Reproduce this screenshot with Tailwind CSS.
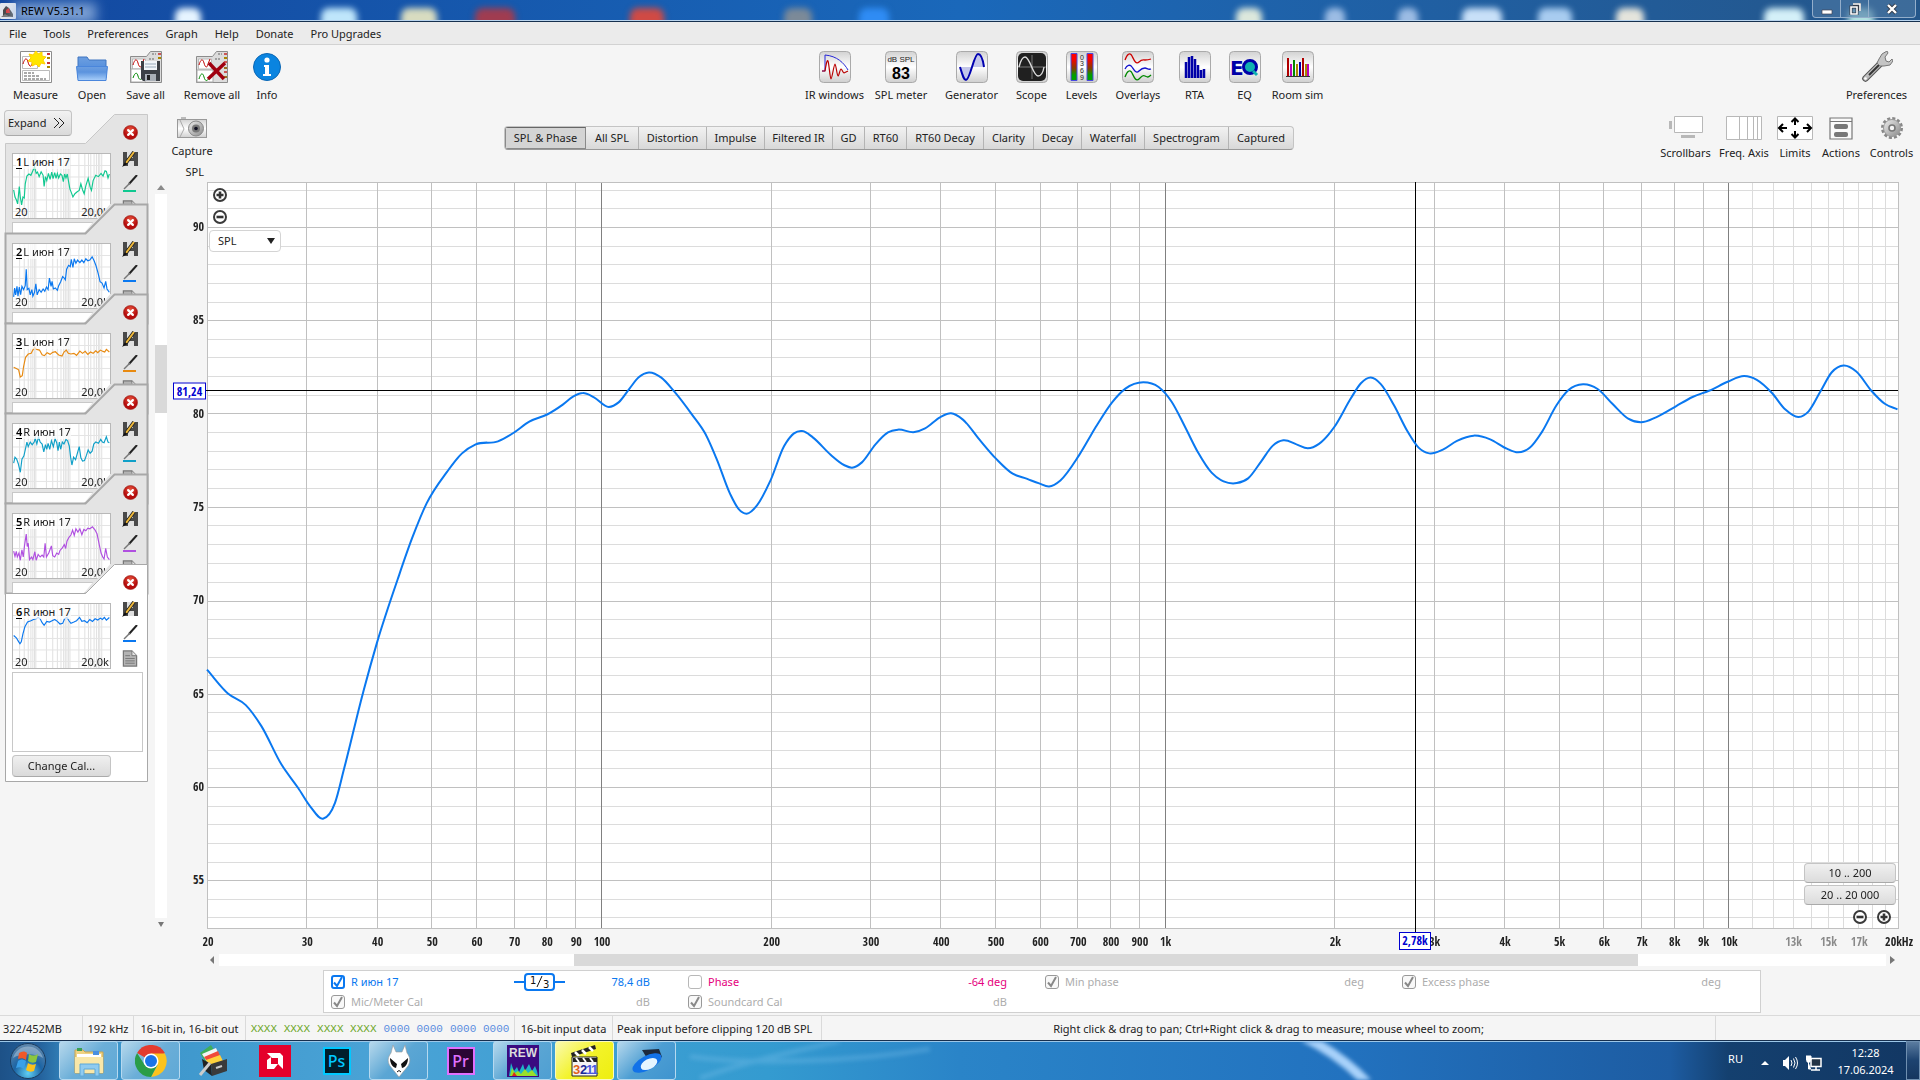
<!DOCTYPE html>
<html lang="en">
<head>
  <meta charset="UTF-8" />
  <meta name="viewport" content="width=device-width, initial-scale=1" />
  <title>REW V5.31.1</title>
  <!-- Tailwind CSS CDN -->
  <script src="https://cdn.jsdelivr.net/npm/@tailwindcss/browser@4"></script>
</head>
<body class="min-h-screen flex flex-col bg-[#f5f5f5] font-['Noto_Sans','Open_Sans',sans-serif] text-[11px] leading-4 text-[#222] whitespace-nowrap overflow-x-hidden">

  <!-- Shared gradients and symbols -->
  <svg class="absolute w-0 h-0" aria-hidden="true">
    <defs>
      <linearGradient id="tile" x2="0" y2="1"><stop stop-color="#d2d2d2"/><stop offset=".5" stop-color="#fff"/><stop offset="1" stop-color="#cfcfcf"/></linearGradient>
      <linearGradient id="level" x2="0" y2="1"><stop offset=".2" stop-color="#f00"/><stop offset=".55" stop-color="#844000"/><stop offset=".8" stop-color="#00a000"/></linearGradient>
      <linearGradient id="folder" x2="0" y2="1"><stop stop-color="#6d9fe0"/><stop offset=".4" stop-color="#5b93de"/><stop offset="1" stop-color="#a9cffa"/></linearGradient>
      <radialGradient id="red" cy=".3"><stop stop-color="#e8553f"/><stop offset="1" stop-color="#b50d0d"/></radialGradient>
      <linearGradient id="metal" x2="1" y2="1"><stop stop-color="#eee"/><stop offset="1" stop-color="#8a8a8a"/></linearGradient>
      <radialGradient id="orb" cy=".85" r=".8"><stop stop-color="#5fd0f5"/><stop offset=".5" stop-color="#1c64a4"/><stop offset="1" stop-color="#5c86ac"/></radialGradient>
      <symbol id="sheet" viewBox="0 0 32 32">
        <path d="M.5 5.500h16l4-5h11v31H.5z" fill="#dcdcdc" stroke="#8c8c8c"/>
        <path d="M2.500 8h13v10h-13z" fill="#fff" stroke="#bbb"/>
        <path d="M3 14c2-7 4-6 5-2s3 6 4 1l2-5" fill="none" stroke="#c00000"/>
        <path d="M28 3h3" stroke="#c55" stroke-width="2"/><path d="M28 7h3" stroke="#a80" stroke-width="2"/>
        <path d="M22 3h4M19 8h5" stroke="#666" stroke-dasharray="2 1"/>
      </symbol>
      <symbol id="close" viewBox="0 0 16 16">
        <circle cx="8" cy="8" r="7.500" fill="url(#red)" stroke="#9a1a12" stroke-width=".6"/>
        <path d="M5.500 5.500l5 5m0-5l-5 5" stroke="#fff" stroke-width="2.400" stroke-linecap="round"/>
      </symbol>
      <symbol id="rename" viewBox="0 0 16 16">
        <path d="M1 1h15v14H1z" fill="#4a4a4a"/><path d="M5 1h6v6H5zM6 10h6v5H6z" fill="#e0e0e0"/>
        <path d="M12 1L4 12" stroke="#222" stroke-width="3.600"/><path d="M12 1L4 12" stroke="#f0b93a" stroke-width="2"/><path d="M0 16l3-5 2.500 2z" fill="#111"/>
      </symbol>
      <symbol id="note" viewBox="0 0 16 18">
        <path d="M1 1h9l5 5v11H1z" fill="#b4b4b4" stroke="#777" stroke-width="1.300"/><path d="M10 1v5h5" fill="#e4e4e4" stroke="#777"/>
        <path d="M3 6h5M3 9h10M3 11.500h10M3 14h10" stroke="#777"/>
      </symbol>
      <symbol id="plus" viewBox="0 0 16 16">
        <circle cx="8" cy="8" r="6" fill="#fff" stroke="#3a3a3a" stroke-width="2"/><path d="M4.500 8h7M8 4.500v7" stroke="#333" stroke-width="2.600"/>
      </symbol>
      <symbol id="minus" viewBox="0 0 16 16">
        <circle cx="8" cy="8" r="6" fill="#fff" stroke="#3a3a3a" stroke-width="2"/><path d="M4.500 8h7" stroke="#333" stroke-width="2.600"/>
      </symbol>
      <symbol id="tick" viewBox="0 0 14 14">
        <path d="M3 7.500l3 3.500L11 2" fill="none" stroke="currentColor" stroke-width="2"/>
      </symbol>
    </defs>
  </svg>

  <!-- Title bar -->
  <header class="relative h-[22px] overflow-hidden flex items-center justify-between bg-gradient-to-r from-[#1348a0] via-[#1a68ba] to-[#24568a] border-b border-[#17304f]">
    <div id="blobs" class="absolute inset-0"></div>
    <div class="absolute inset-x-0 bottom-0 h-px bg-[#b9d4ee]"></div>
    <div class="relative flex items-center gap-[5px]">
      <svg class="w-4 h-4" viewBox="0 0 16 16"><rect width="16" height="16" rx="1" fill="#e4e8ee"/><path d="M3 13V7l3-4 3 2 4 6v3z" fill="#444"/><path d="M6 7l3-2 1 5H6z" fill="#d33"/><path d="M1 14l4-3 5 3z" fill="#777"/></svg>
      <div class="absolute left-3 top-0 w-[84px] h-5 bg-[#a9c4e8]/70 blur-[6px]"></div>
      <h1 class="relative text-[11px] text-black">REW V5.31.1</h1>
    </div>
    <div class="relative flex self-start mr-1 h-[18px] rounded-b border border-t-0 border-[#93aecb] bg-[#4f79a5]/60">
      <button class="w-[28px] flex justify-center items-center border-r border-[#93aecb]" aria-label="Minimize"><svg class="w-3 h-3" viewBox="0 0 12 12"><path d="M1 7h10v4H1z" fill="#fff" stroke="#445" stroke-width=".7"/></svg></button>
      <button class="w-[28px] flex justify-center items-center border-r border-[#93aecb]" aria-label="Restore"><svg class="w-3 h-3" viewBox="0 0 12 12"><path d="M4 1h7v7M2 4h6v7H2z" fill="none" stroke="#333b48" stroke-width="3"/><path d="M4 1h7v7M2 4h6v7H2z" fill="none" stroke="#fff" stroke-width="1.600"/></svg></button>
      <button class="w-[46px] flex justify-center items-center" aria-label="Close"><svg class="w-3 h-3" viewBox="0 0 12 12"><path d="M2 2l8 8m0-8l-8 8" stroke="#333b48" stroke-width="4"/><path d="M2 2l8 8m0-8l-8 8" stroke="#fff" stroke-width="2.400"/></svg></button>
    </div>
  </header>

  <!-- Menu bar -->
  <nav class="h-[23px] flex items-center gap-[17px] px-[9px] pt-px bg-[#ebebeb] border-b border-[#d2d2d2]">
    <button>File</button><button>Tools</button><button>Preferences</button><button>Graph</button><button>Help</button><button>Donate</button><button>Pro Upgrades</button>
  </nav>

  <!-- Main toolbar -->
  <div class="flex justify-between pt-[6px] pb-[5px] px-[13px]">
    <div class="flex gap-[18px]">
      <button class="w-[45px] flex flex-col items-center gap-1">
        <svg class="w-8 h-8" viewBox="0 0 32 32"><path d="M.5.5h31v31H.5z" fill="#fff" stroke="#8c8c8c"/><path d="M2.500 5.500h15v12h-15zM2.500 19.500h27v10h-27z" fill="none" stroke="#bbb"/><path d="M3 13c2-7 4-6 5-2s3 6 4 2l2-4" fill="none" stroke="#c00000"/><path d="M4 22h10M4 25h15M4 28h22" stroke="#555" stroke-dasharray="3 1"/><path d="M27 3h3M27 12h3" stroke="#c33" stroke-width="2"/><path d="M27 7h3M27 16h3" stroke="#a80" stroke-width="2"/><path d="M16 0l2 3 4-2 0 4 4 1-3 3 2 4-4-1-2 4-3-3-4 2 0-4-4-1 3-3-2-4 4 1z" fill="#ffe600" stroke="#ffcf00"/></svg>
        <span>Measure</span>
      </button>
      <button class="w-8 flex flex-col items-center gap-1">
        <svg class="w-8 h-8" viewBox="0 0 32 32"><path d="M2 27V6h9l2 3h17v18z" fill="url(#folder)" stroke="#3f74c0"/><path d="M.5 15.500h31L30 29.500H2z" fill="url(#folder)" stroke="#4a86dc"/></svg>
        <span>Open</span>
      </button>
      <button class="w-[39px] flex flex-col items-center gap-1">
        <svg class="w-8 h-8" viewBox="0 0 32 32"><use href="#sheet"/><path d="M1 18h14v13H1z" fill="#fff" stroke="#aaa"/><path d="M3 27c2-6 4-6 5-2s3 5 5 0" fill="none" stroke="#080"/><path d="M11 10h19v20H13l-2-2z" fill="#3c4046"/><path d="M14 10h13v9H14z" fill="#f2f6fa"/><path d="M15 13h11M15 16h11" stroke="#9ab"/><path d="M15 23h11v7H15z" fill="#aab0b8"/><path d="M17 24h3v5h-3z" fill="#222"/></svg>
        <span>Save all</span>
      </button>
      <button class="w-[58px] flex flex-col items-center gap-1">
        <svg class="w-8 h-8" viewBox="0 0 32 32"><use href="#sheet"/><path d="M1 19h16v12H1z" fill="#fff" stroke="#aaa"/><path d="M3 28c2-7 4-6 5-2s3 5 5 1" fill="none" stroke="#080"/><path d="M28 11h3M28 21h3" stroke="#c55" stroke-width="2"/><path d="M28 17h3M28 26h3" stroke="#997020" stroke-width="2"/><path d="M13 12l15 16m1-16L12 28" stroke="#a00010" stroke-width="3.500"/></svg>
        <span>Remove all</span>
      </button>
      <button class="-ml-2 w-8 flex flex-col items-center gap-1">
        <svg class="w-8 h-8" viewBox="0 0 32 32"><circle cx="16" cy="16" r="13.500" fill="#0a84e0" stroke="#0a66b4"/><path d="M13 14h5v9h2v2h-8v-2h2v-7h-1z" fill="#fff"/><circle cx="16" cy="9" r="2.600" fill="#fff"/></svg>
        <span>Info</span>
      </button>
    </div>

    <div class="flex gap-[10px]">
      <button class="w-[60px] flex flex-col items-center gap-1">
        <svg class="w-8 h-8" viewBox="0 0 32 32"><rect x=".5" y=".5" width="31" height="31" rx="4" fill="url(#tile)" stroke="#aaa"/><path d="M3 20h3V4c12 1 19 8 23 15" fill="none" stroke="#2626d8"/><path d="M3 20h3c1-6 2-12 3-10s2 18 3 18 3-15 4-15 2 12 3 12 2-7 3-7 2 4 3 4l4-2" fill="none" stroke="#b80000" stroke-width="1.200"/></svg>
        <span>IR windows</span>
      </button>
      <button class="w-[53px] flex flex-col items-center gap-1">
        <svg class="w-8 h-8" viewBox="0 0 32 32"><rect x=".5" y=".5" width="31" height="31" rx="4" fill="url(#tile)" stroke="#aaa"/><text x="16" y="11" text-anchor="middle" font-family="Liberation Sans" font-size="8" fill="#222">dB SPL</text><text x="16" y="28" text-anchor="middle" font-family="Liberation Sans" font-weight="700" font-size="16">83</text></svg>
        <span>SPL meter</span>
      </button>
      <button class="w-[68px] flex flex-col items-center gap-1">
        <svg class="w-8 h-8" viewBox="0 0 32 32"><rect x=".5" y=".5" width="31" height="31" rx="4" fill="url(#tile)" stroke="#aaa"/><path d="M4 16h12c-3 12-5 13-6 13s-4-4-6-13zM16 16h13C26 5 24 3 22 3s-3 3-6 13z" fill="#c3c6ea"/><path d="M4 16c3 10 4 13 6 13 4 0 8-26 12-26 3 0 5 6 6 13" fill="none" stroke="#0000b0" stroke-width="2"/></svg>
        <span>Generator</span>
      </button>
      <button class="w-8 flex flex-col items-center gap-1">
        <svg class="w-8 h-8" viewBox="0 0 32 32"><rect x=".5" y=".5" width="31" height="31" rx="4" fill="url(#tile)" stroke="#aaa"/><rect x="2" y="2" width="28" height="28" rx="5" fill="#202020"/><path d="M2 16h28M16 4v24" stroke="#777"/><path d="M3 16C5 8 7 6 9 6c5 0 8 19 13 19 3 0 5-3 6-9" fill="none" stroke="#ddd" stroke-width="1.400"/></svg>
        <span>Scope</span>
      </button>
      <button class="w-12 flex flex-col items-center gap-1">
        <svg class="w-8 h-8" viewBox="0 0 32 32"><rect x=".5" y=".5" width="31" height="31" rx="4" fill="url(#tile)" stroke="#aaa"/><path d="M5 2.500h6v27H5zM21 2.500h6v27h-6z" fill="url(#level)" stroke="#4a4ae0"/><g font-family="Liberation Sans" font-size="7" text-anchor="middle" fill="#222"><text x="16" y="9">0</text><text x="16" y="15">3</text><text x="16" y="22">6</text><text x="16" y="29">9</text></g></svg>
        <span>Levels</span>
      </button>
      <button class="w-[45px] flex flex-col items-center gap-1">
        <svg class="w-8 h-8" viewBox="0 0 32 32"><rect x=".5" y=".5" width="31" height="31" rx="4" fill="url(#tile)" stroke="#aaa"/><g fill="none" stroke-width="1.300"><path d="M3 9c2-6 5-8 7-4s4 9 7 6 4-2 6-2 3 0 6-1" stroke="#c00"/><path d="M3 18c2-4 5-5 7-2s4 7 7 4 4-3 6-3 3 2 6 1" stroke="#11c"/><path d="M3 26c2-6 5-8 7-4s4 9 7 6 4-4 6-3 3 2 6-1" stroke="#080"/></g></svg>
        <span>Overlays</span>
      </button>
      <button class="w-12 flex flex-col items-center gap-1">
        <svg class="w-8 h-8" viewBox="0 0 32 32"><rect x=".5" y=".5" width="31" height="31" rx="4" fill="url(#tile)" stroke="#aaa"/><path d="M7 27V11M10 27V6M13 27V5M16 27V8M19 27V14M22 27v-8M25 27v-9" stroke="#0000a8" stroke-width="2.500"/></svg>
        <span>RTA</span>
      </button>
      <button class="w-8 flex flex-col items-center gap-1">
        <svg class="w-8 h-8" viewBox="0 0 32 32"><rect x=".5" y=".5" width="31" height="31" rx="4" fill="url(#tile)" stroke="#aaa"/><text x="1" y="24" font-family="DejaVu Sans" font-weight="700" font-size="20" fill="#0000a8">E</text><circle cx="21" cy="16" r="6.500" fill="#10b0b0" stroke="#0000a8" stroke-width="3"/><path d="M24 20l4 4" stroke="#10b0b0" stroke-width="3"/></svg>
        <span>EQ</span>
      </button>
      <button class="w-[54px] flex flex-col items-center gap-1">
        <svg class="w-8 h-8" viewBox="0 0 32 32"><rect x=".5" y=".5" width="31" height="31" rx="4" fill="url(#tile)" stroke="#aaa"/><g stroke-width="2"><path d="M6 25V7" stroke="#b00000"/><path d="M9 25V13" stroke="#b0b"/><path d="M12 25V9" stroke="#080"/><path d="M15 25V13" stroke="#a80"/><path d="M18 25V11" stroke="#00a"/><path d="M21 25V7" stroke="#b00000"/><path d="M24 25V13" stroke="#a80"/><path d="M26 25V13" stroke="#b0b"/></g><path d="M4 25.500h24" stroke="#333"/></svg>
        <span>Room sim</span>
      </button>
    </div>

    <button class="w-[61px] flex flex-col items-center gap-1">
      <svg class="w-8 h-8" viewBox="0 0 32 32"><path d="M4.500 27.500L20 12" stroke="#555" stroke-width="6.500" stroke-linecap="round"/><path d="M4.500 27.500L20 12" stroke="url(#metal)" stroke-width="4.500" stroke-linecap="round"/><path d="M8 24L18 14" stroke="#333" stroke-width="2"/><path d="M18 8l3-5 5-3 1 2-3 4 1 4 3 1 3-3 1 2-3 4-6 1-4 0-3-3z" fill="#c4c4c4" stroke="#777"/><circle cx="4.500" cy="27.500" r="1.300" fill="#fff"/></svg>
      <span>Preferences</span>
    </button>
  </div>

  <div class="flex-1 flex">

    <!-- Measurement list -->
    <aside class="w-[167px] flex">
      <div class="w-[155px] pt-[2px]">
        <button class="relative z-10 ml-1 w-[68px] h-[26px] flex items-center justify-between pl-[3px] pr-[6px] rounded-[4px] border border-[#c4c4c4] border-b-[#aaa] bg-gradient-to-b from-[#f2f2f2] to-[#dadada]">
          Expand
          <svg class="w-3 h-3" viewBox="0 0 12 12"><path d="M1 1l5 5-5 5M6 1l5 5-5 5" fill="none" stroke="#222"/></svg>
        </button>
        <ul id="tabs" class="-mt-[22px] pl-[5px]"></ul>
      </div>
      <div class="flex-1 flex flex-col pt-[74px] pb-[85px]">
        <svg class="h-3 w-3" viewBox="0 0 12 12"><path d="M2 8l4-5 4 5z" fill="#8a8a8a"/></svg>
        <div class="flex-1 bg-white"><div class="mt-[151px] h-[68px] bg-[#d9d9d9]"></div></div>
        <svg class="h-3 w-3" viewBox="0 0 12 12"><path d="M3 4h6l-3 5z" fill="#777"/></svg>
      </div>
    </aside>

    <main class="flex-1 min-w-0 flex flex-col">
      <div class="h-[57px] flex items-start pl-1 pr-[6px]">
        <button class="w-[42px] flex flex-col items-center pt-2 gap-[3px]">
          <svg class="w-8 h-6" viewBox="0 0 32 24"><path d="M5 1h5v3H5z" fill="#bbb"/><rect x="1.500" y="3.500" width="29" height="18" fill="url(#tile)" stroke="#999"/><path d="M4 4l4 9-4 8" fill="none" stroke="#aaa"/><circle cx="20" cy="12.500" r="7.500" fill="url(#metal)" stroke="#888"/><circle cx="20" cy="12.500" r="4" fill="#777"/><circle cx="20" cy="12.500" r="1.800" fill="#112"/></svg>
          <span>Capture</span>
        </button>
        <div class="ml-[291px] mt-[18px] h-6 flex rounded-[4px] border border-[#c4c4c4] border-b-[#999] overflow-hidden bg-gradient-to-b from-[#f2f2f2] to-[#d8d8d8]">
          <button class="w-[81px] border border-[#8a8a8a] border-t-[#666] bg-[#d4d4d4]">SPL &amp; Phase</button>
          <button class="w-[53px] border-r border-[#b4b4b4]">All SPL</button>
          <button class="w-[68px] border-r border-[#b4b4b4]">Distortion</button>
          <button class="w-[58px] border-r border-[#b4b4b4]">Impulse</button>
          <button class="w-[68px] border-r border-[#b4b4b4]">Filtered IR</button>
          <button class="w-[32px] border-r border-[#b4b4b4]">GD</button>
          <button class="w-[42px] border-r border-[#b4b4b4]">RT60</button>
          <button class="w-[77px] border-r border-[#b4b4b4]">RT60 Decay</button>
          <button class="w-[50px] border-r border-[#b4b4b4]">Clarity</button>
          <button class="w-[48px] border-r border-[#b4b4b4]">Decay</button>
          <button class="w-[63px] border-r border-[#b4b4b4]">Waterfall</button>
          <button class="w-[84px] border-r border-[#b4b4b4]">Spectrogram</button>
          <button class="w-[64px]">Captured</button>
        </div>
        <div class="ml-auto flex gap-2 pt-2">
          <button class="w-[51px] flex flex-col items-center gap-[5px]">
            <svg class="w-9 h-6" viewBox="0 0 36 24"><path d="M6.500.5h28v16h-28z" fill="#fff" stroke="#b8b8b8"/><path d="M1 5h3v8H1zM13 19h14v3H13z" fill="#b8b8b8"/></svg>
            <span>Scrollbars</span>
          </button>
          <button class="w-[50px] flex flex-col items-center gap-[5px]">
            <svg class="w-9 h-6" viewBox="0 0 36 24"><path d="M.5.5h35v23H.5z" fill="#fff" stroke="#b8b8b8"/><path d="M13.500 0v24M21.500 0v24M27.500 0v24M31.500 0v24" stroke="#b8b8b8"/></svg>
            <span>Freq. Axis</span>
          </button>
          <button class="w-9 flex flex-col items-center gap-[5px]">
            <svg class="w-9 h-6" viewBox="0 0 36 24"><path d="M.5.5h35v23H.5z" fill="#fff" stroke="#b8b8b8"/><path d="M2 12h8M26 12h8M18 2v7M18 15v7M6 8l-4 4 4 4M30 8l4 4-4 4M14.500 6L18 2.500 21.500 6M14.500 18l3.500 3.500 3.500-3.500" fill="none" stroke="#000" stroke-width="2"/></svg>
            <span>Limits</span>
          </button>
          <button class="w-10 flex flex-col items-center gap-[5px]">
            <svg class="w-6 h-6" viewBox="0 0 24 24"><path d="M1 2h22v21H1z" fill="#fafafa" stroke="#777" stroke-width="1.200"/><path d="M1 5.500h22" stroke="#777"/><rect x="5" y="8" width="14" height="5" rx="2" fill="#777"/><rect x="5" y="16" width="14" height="5" rx="2" fill="#777"/></svg>
            <span>Actions</span>
          </button>
          <button class="w-[45px] flex flex-col items-center gap-[5px]">
            <svg class="w-6 h-6" viewBox="0 0 24 24"><circle cx="12" cy="12" r="9.500" fill="none" stroke="#888" stroke-width="3" stroke-dasharray="3 1.970"/><circle cx="12" cy="12" r="8.500" fill="url(#metal)" stroke="#999"/><circle cx="12" cy="12" r="3" fill="#f5f5f5" stroke="#777" stroke-width="1.600"/></svg>
            <span>Controls</span>
          </button>
        </div>
      </div>
      <div class="w-10 h-[17px] pr-[3px] text-right leading-[14px]">SPL</div>

      <!-- Chart -->
      <div class="flex-1 flex pr-[22px]">
        <div id="yAxis" class="relative w-10 font-['Open_Sans_Condensed','Noto_Sans',sans-serif] text-xs"></div>
        <div class="relative flex-1">
          <svg id="plot" class="absolute inset-0 w-full h-full overflow-visible" viewBox="0 0 1691 746" preserveAspectRatio="none"></svg>
          <div class="absolute left-[5px] top-[5px] flex flex-col gap-[6px]">
            <button aria-label="Zoom in SPL"><svg class="block w-4 h-4"><use href="#plus"/></svg></button>
            <button aria-label="Zoom out SPL"><svg class="block w-4 h-4"><use href="#minus"/></svg></button>
          </div>
          <div class="absolute left-[2px] top-[48px]">
            <select aria-label="Left axis" class="appearance-none block w-[72px] h-[22px] pl-2 bg-white rounded-[4px] border border-[#d4d4d4] outline-none"><option>SPL</option></select>
            <svg class="absolute right-[5px] top-[7px] w-[10px] h-2 pointer-events-none" viewBox="0 0 10 8"><path d="M1 1h8L5 7z" fill="#222"/></svg>
          </div>
          <div class="absolute right-[2px] bottom-1 flex flex-col gap-[2px]">
            <button class="w-[92px] h-5 rounded-[4px] border border-[#c4c4c4] border-b-[#aaa] bg-gradient-to-b from-[#f0f0f0] to-[#dcdcdc] leading-[18px]">10 .. 200</button>
            <button class="w-[92px] h-5 rounded-[4px] border border-[#c4c4c4] border-b-[#aaa] bg-gradient-to-b from-[#f0f0f0] to-[#dcdcdc] leading-[18px]">20 .. 20 000</button>
            <div class="flex justify-end gap-2 pt-[2px] pr-1">
              <button aria-label="Zoom out frequency"><svg class="block w-4 h-4"><use href="#minus"/></svg></button>
              <button aria-label="Zoom in frequency"><svg class="block w-4 h-4"><use href="#plus"/></svg></button>
            </div>
          </div>
        </div>
      </div>
      <div class="pl-10 pr-[22px]">
        <div id="xAxis" class="relative h-[25px] font-['Open_Sans_Condensed','Noto_Sans',sans-serif] text-xs"></div>
        <div class="h-3 flex">
          <svg class="w-3 h-3" viewBox="0 0 12 12"><path d="M7 2v8L3 6z" fill="#777"/></svg>
          <div class="flex-1 bg-white"><div class="ml-[21.3%] w-[63.8%] h-3 bg-[#d9d9d9]"></div></div>
          <svg class="w-3 h-3" viewBox="0 0 12 12"><path d="M4 2v8l5-4z" fill="#777"/></svg>
        </div>
      </div>

      <!-- Legend -->
      <div class="mt-1 mb-[2px] ml-[156px] mr-[159px] h-[43px] grid grid-cols-4 grid-rows-[20px_20px] gap-x-[38px] pl-[7px] pr-[39px] pt-px items-center border border-[#d0d0d0] bg-white text-[#adadad]">
        <div class="flex items-center gap-[6px] text-[#0a78f0]">
          <span class="relative w-[14px] h-[14px]"><input id="trace" type="checkbox" checked class="block appearance-none w-[14px] h-[14px] rounded-[3px] border-2 border-[#0a78f0]" /><svg class="absolute inset-0 w-[14px] h-[14px] pointer-events-none"><use href="#tick"/></svg></span>
          <label for="trace">R июн 17</label>
          <svg class="ml-auto w-[51px] h-[18px]" viewBox="0 0 51 18"><path d="M0 9h10M41 9h10" stroke="#0a78f0" stroke-width="2"/><rect x="11" y="1" width="29" height="16" rx="3" fill="#fff" stroke="#0a78f0" stroke-width="2"/><g font-family="DejaVu Sans" font-size="10" fill="#111"><text x="16" y="11">1</text><text x="29" y="15">3</text></g><path d="M23 14l5-11" stroke="#111"/></svg>
          <span class="ml-10">78,4 dB</span>
        </div>
        <div class="flex items-center gap-[6px] text-[#e5007d]">
          <input id="phase" type="checkbox" class="appearance-none w-[14px] h-[14px] rounded-[3px] border border-[#b8b8b8]" />
          <label for="phase">Phase</label><span class="ml-auto">-64 deg</span>
        </div>
        <div class="flex items-center gap-[6px]">
          <span class="relative w-[14px] h-[14px] text-[#888]"><input id="minPhase" type="checkbox" checked class="block appearance-none w-[14px] h-[14px] rounded-[3px] border border-[#999] bg-[#f8f8f8]" /><svg class="absolute inset-0 w-[14px] h-[14px] pointer-events-none"><use href="#tick"/></svg></span>
          <label for="minPhase">Min phase</label><span class="ml-auto">deg</span>
        </div>
        <div class="flex items-center gap-[6px]">
          <span class="relative w-[14px] h-[14px] text-[#888]"><input id="excess" type="checkbox" checked class="block appearance-none w-[14px] h-[14px] rounded-[3px] border border-[#999] bg-[#f8f8f8]" /><svg class="absolute inset-0 w-[14px] h-[14px] pointer-events-none"><use href="#tick"/></svg></span>
          <label for="excess">Excess phase</label><span class="ml-auto">deg</span>
        </div>
        <div class="flex items-center gap-[6px]">
          <span class="relative w-[14px] h-[14px] text-[#888]"><input id="micCal" type="checkbox" checked class="block appearance-none w-[14px] h-[14px] rounded-[3px] border border-[#999] bg-[#f8f8f8]" /><svg class="absolute inset-0 w-[14px] h-[14px] pointer-events-none"><use href="#tick"/></svg></span>
          <label for="micCal">Mic/Meter Cal</label><span class="ml-auto">dB</span>
        </div>
        <div class="flex items-center gap-[6px]">
          <span class="relative w-[14px] h-[14px] text-[#888]"><input id="cardCal" type="checkbox" checked class="block appearance-none w-[14px] h-[14px] rounded-[3px] border border-[#999] bg-[#f8f8f8]" /><svg class="absolute inset-0 w-[14px] h-[14px] pointer-events-none"><use href="#tick"/></svg></span>
          <label for="cardCal">Soundcard Cal</label><span class="ml-auto">dB</span>
        </div>
      </div>
    </main>
  </div>

  <!-- Status bar -->
  <footer class="h-[25px] flex items-stretch leading-[26px] border-t border-[#dadada]">
    <div class="w-[83px] pl-[3px] border-r border-[#dadada]">322/452MB</div>
    <div class="w-[51px] text-center border-r border-[#dadada]">192 kHz</div>
    <div class="w-28 text-center border-r border-[#dadada]">16-bit in, 16-bit out</div>
    <div class="w-[269px] flex justify-center gap-[7px] border-r border-[#dadada] text-[#6ba51e] font-['Liberation_Mono',monospace]">
      <span>XXXX XXXX</span><span>XXXX XXXX</span><span class="text-[#5b8de0]">0000 0000</span><span class="text-[#5b8de0]">0000 0000</span>
    </div>
    <div class="w-[98px] text-center border-r border-[#dadada]">16-bit input data</div>
    <div class="w-[209px] pl-1 border-r border-[#dadada]">Peak input before clipping 120 dB SPL</div>
    <div class="flex-1 text-center border-r border-[#dadada]">Right click &amp; drag to pan; Ctrl+Right click &amp; drag to measure; mouse wheel to zoom;</div>
    <div class="w-[204px]"></div>
  </footer>

  <!-- Taskbar -->
  <div class="relative h-10 overflow-hidden flex items-stretch gap-[3px] border-t border-[#17304f] bg-linear-[90deg,#1d5187_0%,#23609b_2%,#3a93c9_4%,#4aa3d6_20%,#349bd0_40%,#2a84c8_50%,#2272bf_70%,#1d5ca2_87%,#14406f_90%,#123763_100%]">
    <div class="absolute inset-x-0 top-0 h-px bg-[#9cc7e8]"></div>
    <svg class="absolute inset-0 w-full h-full blur-[2px]" viewBox="0 0 1920 40" preserveAspectRatio="none"><path d="M1300-6C1330 8 1352 26 1370 46" fill="none" stroke="#a9d2fa" stroke-width="10"/><path d="M700 38C750 20 780 14 840 0M690 16c60 8 160 6 240-8" fill="none" stroke="#7cc0ea" stroke-opacity=".35" stroke-width="5"/></svg>
    <button class="relative w-14 flex items-center justify-center" aria-label="Start">
      <svg class="w-[38px] h-[38px]" viewBox="0 0 38 38"><circle cx="19" cy="19" r="17.500" fill="url(#orb)" stroke="#1b3c5e"/><path d="M4 16a15.500 15.500 0 0 1 30 0c-8-5-22-5-30 0z" fill="#fff" fill-opacity=".3"/><path d="M10 11c3-2 6-2 8 0l-1 7c-3-2-5-2-8-1z" fill="#f0592a"/><path d="M20 12c3 2 6 2 9 0l-2 8c-3 1-5 1-8-1z" fill="#8cc63f"/><path d="M9 19c3-2 5-2 8 0l-2 8c-3-2-5-2-8-1z" fill="#3aa0e8"/><path d="M19 21c3 2 5 2 8 1l-2 7c-3 1-5 1-8-1z" fill="#fcc21b"/></svg>
    </button>
    <button class="relative w-[59px] flex items-center justify-center rounded-[3px] border border-[#b5d9f0] bg-linear-[135deg,#b6d8ec_0%,#6baed8_50%,#5fa9d6_100%]" aria-label="Explorer">
      <svg class="w-8 h-8" viewBox="0 0 32 32"><path d="M2 5h8l2 2h18v21H2z" fill="#efd383" stroke="#c9a550"/><path d="M4 9h24v4H4z" fill="#fff"/><path d="M4 3h5v3H4z" fill="#3aa055"/><path d="M20 6h6v4h-6z" fill="#4a90e0"/><path d="M2 12h28v16H2z" fill="#f9e7a8"/><path d="M7 31V19h19v12h-4v-7H11v7z" fill="#8fcbf0" stroke="#5da8d8"/></svg>
    </button>
    <button class="relative w-[59px] flex items-center justify-center rounded-[3px] border border-[#b5d9f0] bg-linear-[135deg,#b6d8ec_0%,#6baed8_50%,#5fa9d6_100%]" aria-label="Chrome">
      <svg class="w-8 h-8" viewBox="0 0 32 32"><path d="M16 16L2.100 8A16 16 0 0 1 29.900 8z" fill="#e33b2e"/><path d="M16 8.500h13.900A16 16 0 0 1 16 32l6.500-12z" fill="#fcc31e"/><path d="M2.100 8A16 16 0 0 0 16 32l6.500-12.200L16 16 9.500 19.700z" fill="#2a9d48"/><circle cx="16" cy="16" r="7.500" fill="#fff"/><circle cx="16" cy="16" r="6" fill="#1a73e8"/></svg>
    </button>
    <button class="relative w-[59px] flex items-center justify-center" aria-label="Organizer">
      <svg class="w-8 h-8" viewBox="0 0 32 32"><path d="M3 8L14 0l7 12-12 6z" fill="#3fae5a"/><path d="M5 9l14-6 5 11-12 6z" fill="#f4f4f4"/><path d="M7 12l14-6 4 9-12 5z" fill="#f04a3a"/><path d="M9 15l14-5 3 6-12 5z" fill="#ffd23c"/><path d="M14 19l16-5v12l-15 5z" fill="#3a3a3a"/><path d="M5 14l9 5 1 12-8-6z" fill="#222"/><path d="M3 30l10-12" stroke="#ccc" stroke-width="3"/><path d="M19 23l6-2" stroke="#ccc" stroke-width="2"/></svg>
    </button>
    <button class="relative w-[59px] flex items-center justify-center" aria-label="AMD">
      <svg class="w-8 h-8" viewBox="0 0 32 32"><path d="M0 0h32v32H0z" fill="#e4002b"/><path d="M8 8h13l3 3v13l-5-5v-6h-6z" fill="#fff"/><path d="M8 15l4-3v7h7l-4 5H8z" fill="#fff"/></svg>
    </button>
    <button class="relative w-[59px] flex items-center justify-center" aria-label="Photoshop">
      <span class="w-7 h-7 border-2 border-[#00c8ff] bg-[#001d2b] text-[#00c8ff] text-base leading-6 font-medium">Ps</span>
    </button>
    <button class="relative w-[59px] flex items-center justify-center rounded-[3px] border border-[#b5d9f0] bg-linear-[135deg,#b6d8ec_0%,#5ba6d4_50%,#4f9fd2_100%]" aria-label="foobar2000">
      <svg class="w-8 h-8" viewBox="0 0 32 32"><path d="M10 0l3 7h6l3-7 2 8c3 4 4 8 1 13l-9 11-9-11C4 16 5 12 8 8z" fill="#fff" stroke="#999" stroke-width=".6"/><path d="M7 13l7 6-1 4c-4-1-6-5-6-10zM25 13l-7 6 1 4c4-1 6-5 6-10z" fill="#111"/><path d="M14 27q2-3 4 0" fill="none" stroke="#111"/></svg>
    </button>
    <button class="relative w-[59px] flex items-center justify-center" aria-label="Premiere">
      <span class="w-7 h-7 border-2 border-[#e070ff] bg-[#2a0634] text-[#e070ff] text-base leading-6 font-medium">Pr</span>
    </button>
    <button class="relative w-[59px] flex items-center justify-center rounded-[3px] border border-[#b5d9f0] bg-linear-[135deg,#b6d8ec_0%,#5ba6d4_50%,#4f9fd2_100%]" aria-label="REW">
      <svg class="w-8 h-8" viewBox="0 0 32 32"><path d="M0 0h32v32H0z" fill="#3a0a80"/><path d="M2 31l2-13 3 8 3-4 2 5 4-8 2 7 4-7 3 7 3-5 2 5 1 5z" fill="#1fb4c8"/><path d="M3 31l2-8 3 5 3-2 3 3 4-5 3 4 4-3 5 6z" fill="#9be02a"/><path d="M5 31l2-4 3 4z" fill="#e02a1a"/><text x="16" y="12" text-anchor="middle" font-family="Liberation Sans" font-weight="700" font-size="12" fill="#ddd">REW</text></svg>
    </button>
    <button class="relative w-[59px] flex items-center justify-center rounded-[3px] border border-[#fafac0] bg-linear-[135deg,#fafab0_0%,#f3f32a_50%,#eeee10_100%]" aria-label="Media Player Classic">
      <svg class="w-8 h-8" viewBox="0 0 32 32"><path d="M2 8L26 0l1 4L3 12z" fill="#222"/><path d="M6 7l4 4M13 5l4 4M20 2l4 4" stroke="#fff" stroke-width="2.500"/><path d="M3 12h25v19H3z" fill="#f4f4f4" stroke="#222"/><path d="M4 13h24v4H4z" fill="#222"/><path d="M7 13l3 4M14 13l3 4M21 13l3 4" stroke="#fff" stroke-width="2"/><text y="29" font-family="Liberation Sans" font-weight="700" font-size="13"><tspan x="4" fill="#e0621a">3</tspan><tspan x="11" fill="#1a2a9a">2</tspan><tspan x="17" fill="#4a5ae0">1</tspan><tspan x="22" fill="#4a5ae0">1</tspan></text></svg>
    </button>
    <button class="relative w-[59px] flex items-center justify-center rounded-[3px] border border-[#b5d9f0] bg-linear-[135deg,#b6d8ec_0%,#4d9ed3_50%,#3f94cf_100%]" aria-label="Clipgrab">
      <svg class="w-8 h-8" viewBox="0 0 32 32"><path d="M11 5l17-1 3 8-12 6z" fill="#1d2a3d"/><ellipse cx="16" cy="18" rx="16" ry="7" transform="rotate(-28 16 18)" fill="#1272e8"/><ellipse cx="18" cy="19" rx="9" ry="5" transform="rotate(-28 18 19)" fill="#e6f6ff"/></svg>
    </button>

    <div class="relative ml-auto flex items-center text-white">
      <span class="mr-[17px] -mt-1">RU</span>
      <svg class="w-[10px] h-[6px] mr-[12px] mt-1" viewBox="0 0 10 6"><path d="M1 5h8L5 1z" fill="#fff"/></svg>
      <svg class="w-4 h-4 mr-[8px] mt-1" viewBox="0 0 16 16"><path d="M1 5h2l4-4v14l-4-4H1z" fill="#fff"/><path d="M9 5q2 3 0 6M11.500 3.500q3 4.500 0 9M13.500 2q4 6 0 12" fill="none" stroke="#fff"/></svg>
      <svg class="w-4 h-4 mr-[15px] mt-1" viewBox="0 0 16 16"><path d="M5 3.500h10v8H5z" fill="#234" stroke="#fff" stroke-width="1.500"/><path d="M5 15h9M10 12v3" stroke="#fff" stroke-width="1.500"/><path d="M0 1h5v4H4v2H1V5H0zM2.500 7v7H5" fill="#fff" stroke="#fff"/></svg>
      <div class="w-[57px] text-center mr-[12px] leading-[17px]">12:28<br />17.06.2024</div>
      <button class="w-[14px] h-full border border-[#6f8fb0] bg-gradient-to-b from-[#5b7ca0] via-[#1d4370] to-[#16365f]" aria-label="Show desktop"></button>
    </div>
  </div>

  <script>
    const TOP_DB = 92.42, PX_PER_DB = 18.63, PX_PER_DECADE = 563.67, W = 1691, H = 746;
    const freqX = f => Math.log10(f / 20) * PX_PER_DECADE;
    const dbY = db => (TOP_DB - db) * PX_PER_DB;

    // Smoothed response, plot units
    const trace = [[0,487],[20.9,510.8],[38.8,522.4],[54.4,543.4],[74.5,581.8],[91,605],[103.5,624],[116,635.8],[128,620],[137,586.3],[155.8,511],[170,460],[190.6,397],[205,356],[219.6,321],[240,289.5],[255,271],[268.7,262],[291,259],[306.7,250.4],[322.3,239.3],[340.1,232.2],[355.8,222.3],[366.9,213.8],[375.9,210.8],[387,215],[401.8,224.6],[411.6,220.1],[422.7,206],[431.7,195],[441.9,190.2],[454,195.1],[467.4,209.4],[485.2,232.6],[498.6,252],[510,277.500],[523.2,311.7],[531.5,326.500],[539.7,331.3],[550,323],[563.4,298.3],[577,264],[587,251],[595.5,248.7],[605.8,255],[623.6,272.4],[637,282.6],[645,285.3],[654.9,280],[668.3,262.2],[681,250],[690.9,247.3],[707.5,249.7],[718.1,246],[733,235],[744,231],[755.9,237.3],[772.5,257.3],[789,276.3],[805.7,291.3],[820.2,296.500],[832.2,301],[842.1,304],[853.4,298],[872,273],[888.6,245],[905.1,220],[918.4,206.3],[936.3,200],[951.6,204.7],[964.8,219.7],[978.1,244.7],[991.4,270.7],[1004.6,290.3],[1016.6,299],[1029.8,300.7],[1041.1,296],[1054.4,278.7],[1065.6,263.5],[1076.3,258],[1089.5,262],[1100.8,266],[1112,261.5],[1127.3,244.7],[1143.9,216],[1153.9,201],[1163.8,195.3],[1173.8,201.8],[1187,223],[1200.3,248.7],[1211.6,265.3],[1222.2,271],[1235.4,267.500],[1250,258.500],[1266.6,253.3],[1283.2,257],[1299.8,266.3],[1311,270],[1323,265.2],[1335,249.500],[1349.5,223],[1361.5,207.8],[1376,202],[1390.6,206.7],[1405.9,222],[1421.2,236.3],[1433.8,240],[1449,235],[1468.9,224],[1485.5,214.7],[1502,208.5],[1520.6,199.5],[1537.2,193.7],[1549.8,197.500],[1565,210.7],[1578.4,227.3],[1591.6,234.7],[1601.6,229],[1613.5,209],[1624.8,190],[1636.7,183.3],[1649.3,189.3],[1664.6,208.7],[1677.8,221.500],[1690.5,227]];

    // Cubic Hermite through unevenly spaced points
    function smooth(p) {
      const n = p.length - 1;
      const slope = i => (p[i + 1][1] - p[i][1]) / (p[i + 1][0] - p[i][0]);
      const m = p.map((_, i) => {
        if (i === 0) return slope(0);
        if (i === n) return slope(n - 1);
        const h0 = p[i][0] - p[i - 1][0], h1 = p[i + 1][0] - p[i][0];
        return (h1 * slope(i - 1) + h0 * slope(i)) / (h0 + h1);
      });
      let d = 'M' + p[0];
      for (let i = 0; i < n; i++) {
        const [x0, y0] = p[i], [x1, y1] = p[i + 1], h = (x1 - x0) / 3;
        d += 'C' + [x0 + h, y0 + m[i] * h, x1 - h, y1 - m[i + 1] * h, x1, y1].map(v => v.toFixed(1));
      }
      return d;
    }

    function drawPlot() {
      const line = (x1, y1, x2, y2, c) => `<path d="M${x1} ${y1}L${x2} ${y2}" stroke="${c}" shape-rendering="crispEdges"/>`;
      const snap = v => Math.round(v) + 0.5;
      let s = `<rect width="${W}" height="${H}" fill="#fff"/>`;
      for (let f = 11000; f < 20000; f += 1000) s += line(snap(freqX(f)), 0, snap(freqX(f)), H, '#dcdcdc');
      for (let db = 53; db <= 92; db++) if (db % 5) s += line(0, snap(dbY(db)), W, snap(dbY(db)), '#dcdcdc');
      for (let db = 55; db <= 90; db += 5) s += line(0, snap(dbY(db)), W, snap(dbY(db)), '#c0c0c0');
      for (const dec of [10, 100, 1000]) for (let n = 2; n <= 10; n++) {
        if (dec === 10 && n === 2) continue;
        const x = snap(freqX(dec * n));
        s += line(x, 0, x, H, n === 10 ? '#808080' : '#c0c0c0');
      }
      s += `<rect x=".5" y=".5" width="${W}" height="${H - 1}" fill="none" stroke="#c0c0c0" shape-rendering="crispEdges"/>`;
      s += line(-1, 208.5, W, 208.5, '#000') + line(1208.5, 0, 1208.5, H + 4, '#000');
      s += `<path d="${smooth(trace)}" fill="none" stroke="#0a78f0" stroke-width="2"/>`;
      document.getElementById('plot').innerHTML = s;
    }

    function drawAxes() {
      let y = '';
      for (let db = 90; db >= 55; db -= 5) y += `<span class="absolute right-[3px] -translate-y-1/2" style="top:${dbY(db) / H * 100}%">${db}</span>`;
      y += `<span class="absolute right-px -translate-y-1/2 w-[33px] h-[17px] border border-[#0000d0] bg-white text-[#0000d0] text-center leading-[15px]" style="top:${208.5 / H * 100}%">81,24</span>`;
      document.getElementById('yAxis').innerHTML = y;

      const labels = [[20,'20'],[30,'30'],[40,'40'],[50,'50'],[60,'60'],[70,'70'],[80,'80'],[90,'90'],[100,'100'],[200,'200'],[300,'300'],[400,'400'],[500,'500'],[600,'600'],[700,'700'],[800,'800'],[900,'900'],[1000,'1k'],[2000,'2k'],[3000,'3k'],[4000,'4k'],[5000,'5k'],[6000,'6k'],[7000,'7k'],[8000,'8k'],[9000,'9k'],[10000,'10k'],[13000,'13k'],[15000,'15k'],[17000,'17k'],[20000,'20kHz']];
      let x = labels.map(([f, t]) => `<span class="absolute top-[5px] -translate-x-1/2 ${f > 10000 && f < 20000 ? 'text-[#8a8a8a]' : 'text-[#222]'}" style="left:${(freqX(f) + 1) / W * 100}%">${t}</span>`).join('');
      x += `<span class="absolute top-[3px] -translate-x-1/2 w-[32px] h-[18px] border border-[#0000d0] bg-white text-[#0000d0] text-center leading-4" style="left:${1208 / W * 100}%">2,78k</span>`;
      document.getElementById('xAxis').innerHTML = x;
    }

    // Thumbnails: name, colour, vertical origin of the points, points
    const tabs = [
      ['L июн 17', '#10c890', 131, '40,240 44,262 48,270 52,283 57,230 60,262 64,286 68,262 72,265 75,222 80,198 86,192 92,196 98,182 103,170 108,190 112,186 117,200 123,185 129,196 132,230 136,200 140,212 145,190 150,208 155,186 159,206 164,188 168,205 172,190 176,204 181,192 186,196 190,215 194,192 198,204 202,192 206,216 210,238 214,248 219,262 225,252 232,246 238,242 243,222 248,240 253,252 258,228 265,205 271,232 275,242 280,212 288,196 296,200 304,190 310,198 316,182 320,184 325,204 329,192'],
      ['L июн 17', '#0a78f0', 401, '40,562 43,535 46,556 50,530 53,560 57,532 61,555 65,530 70,540 75,528 78,478 81,540 86,536 90,556 95,540 98,560 103,548 107,522 111,556 117,540 123,548 129,538 134,545 139,532 144,540 148,505 153,530 156,515 160,538 166,535 172,542 176,528 182,516 188,500 192,504 196,510 200,478 206,466 211,470 214,448 219,472 223,446 228,460 233,450 240,458 246,450 252,458 258,446 264,452 270,450 277,440 283,452 289,468 295,490 301,516 307,520 313,535 318,515 322,538 329,548'],
      ['L июн 17', '#e88a10', 671, '40,772 48,776 55,780 60,802 66,798 70,770 76,742 84,732 93,730 98,720 103,712 110,718 118,720 126,734 133,737 141,728 150,733 158,727 166,725 176,735 186,738 192,726 199,720 205,730 213,732 222,730 230,736 240,723 248,730 256,724 264,733 272,726 280,730 288,722 294,728 302,720 310,724 315,726 320,718 329,726'],
      ['R июн 17', '#10a0c8', 11, '40,130 44,112 49,118 54,132 60,158 65,118 71,108 76,85 80,66 84,80 90,66 96,74 102,66 105,55 110,72 115,50 120,66 126,72 131,96 136,74 140,88 144,70 149,88 154,62 160,80 165,56 170,68 174,92 178,66 182,88 187,66 192,72 198,58 203,62 208,78 212,112 216,136 221,112 227,120 233,98 238,80 243,114 248,124 254,122 260,106 265,90 271,100 277,94 282,72 288,66 296,70 303,58 308,66 313,68 320,50 325,66 329,68'],
      ['R июн 17', '#b050e0', 281, '40,394 44,410 48,395 51,412 56,400 60,422 65,390 69,412 73,376 78,342 81,380 84,370 88,420 94,412 98,420 104,396 108,422 114,404 120,412 126,406 131,412 135,370 139,412 146,400 154,378 158,408 164,412 170,400 176,404 180,392 187,384 193,374 197,386 201,364 207,352 213,345 218,330 223,346 228,326 234,336 240,326 246,344 252,328 258,332 264,324 270,326 278,320 286,330 292,342 298,372 304,400 309,412 313,418 318,386 323,412 329,420'],
      ['R июн 17', '#0a78f0', 551, '40,647 48,654 54,664 59,672 63,666 68,642 74,620 82,606 92,602 100,598 108,596 114,592 120,596 126,608 132,616 140,604 148,606 156,602 164,598 172,604 180,612 188,610 194,596 201,592 207,602 213,610 222,606 230,602 239,592 246,604 254,602 262,608 270,598 278,604 286,596 294,600 302,594 308,598 314,592 320,600 329,592'],
    ];

    const gridX = [58, 72, 84, 92, 98, 103, 107, 139, 158, 172, 183, 191, 196, 201, 206, 210, 237, 255, 266, 273, 283, 290, 296, 300, 306];

    function drawTabs() {
      document.getElementById('tabs').innerHTML = tabs.map(([name, color, top, pts], i) => {
        const last = i === tabs.length - 1, h = last ? 217 : 119;
        let g = '';
        for (const x of gridX) g += `<path d="M${x} ${top}v195" stroke="#e0e0e0" stroke-width="3"/>`;
        for (let k = 1; k < 6; k++) g += `<path d="M38 ${top + k * 35}h293" stroke="#e4e4e4" stroke-width="3"/>`;
        return `<li class="relative ${last ? 'h-[218px]' : 'h-[90px]'}">
          <svg class="absolute left-0 top-0 overflow-visible" width="144" height="${h + 1}"><path d="M.5 ${h + .5}V29.5H80.5L109.5.5H142.5V${h + .5}Z" fill="${last ? '#fff' : '#e4e4e4'}" stroke="${i ? '#a8a8a8' : '#c8c8c8'}" stroke-width="${i && !last ? 2 : 1}"/></svg>
          <div class="relative flex">
            <div class="relative ml-[7px] mt-[39px] w-[99px] h-[66px] border border-[#b8b8b8] bg-white ${last ? '' : '[clip-path:polygon(0_0,100%_0,100%_76%,86%_100%,0_100%)]'}">
              <svg class="absolute inset-0 w-full h-full" viewBox="38 ${top} 293 195" preserveAspectRatio="none">${g}<polyline points="${pts}" fill="none" stroke="${color}" stroke-width="3.5"/></svg>
              <span class="absolute left-[3px] top-0 bg-white/70 flex gap-px leading-[15px]"><b class="h-[15px] border-b border-black text-black font-semibold">${i + 1}</b>${name}</span>
              <span class="absolute left-[2px] bottom-[-2px]">20</span>
              <span class="absolute right-[1px] bottom-[-2px]">20,0k</span>
            </div>
            <div class="ml-[11px] pt-[11px] w-4 h-[105px] flex flex-col items-center">
              <button aria-label="Remove"><svg class="block w-[15px] h-[15px]"><use href="#close"/></svg></button>
              <button class="mt-[11px]" aria-label="Rename"><svg class="block w-4 h-4"><use href="#rename"/></svg></button>
              <button class="mt-2" aria-label="Trace colour"><svg class="block w-4 h-[17px]" viewBox="0 0 16 17"><path d="M15 0L7 9" stroke="#222" stroke-width="2"/><path d="M8 8l-6 6" stroke="#777" stroke-width="1.5"/><path d="M1 15h13v2H1z" fill="${color}"/></svg></button>
              <button class="mt-2" aria-label="Notes"><svg class="block w-4 h-[17px]"><use href="#note"/></svg></button>
            </div>
          </div>
          <textarea aria-label="Notes ${i + 1}" class="relative block mt-[3px] ml-[7px] w-[131px] ${last ? 'h-[80px]' : 'h-[11px]'} resize-none border border-[#c8c8c8] ${last ? '' : 'border-b-0 [clip-path:polygon(0_0,62%_0,55%_100%,0_100%)]'} bg-white"></textarea>
          ${last ? '<button class="relative mt-[3px] ml-[7px] w-[99px] h-[22px] rounded-[4px] border border-[#c4c4c4] border-b-[#aaa] bg-gradient-to-b from-[#f0f0f0] to-[#dadada]">Change Cal...</button>' : ''}
        </li>`;
      }).join('');
    }

    // Desktop icons seen through the glass title bar
    const blobs = [[188,26,'#e6f4ff'],[339,36,'#bfe6fb'],[419,36,'#d8dcc0'],[495,40,'#a03c50'],[647,34,'#d04a44'],[798,28,'#7c8a98'],[874,30,'#2f8cf4'],[1249,26,'#dce8dc'],[1335,20,'#9cbce4'],[1408,20,'#9cbce4'],[1482,40,'#c8e0f8'],[1555,34,'#a8ccf0'],[1630,28,'#e4e4dc'],[1784,40,'#d4f0f8'],[1861,26,'#b0e0e0']];

    function drawBlobs() {
      document.getElementById('blobs').innerHTML = blobs.map(([x, w, c]) => `<i class="absolute top-2 h-6 -translate-x-1/2 rounded-t-lg blur-[3px]" style="left:${x / 19.2}%;width:${w}px;background:${c}"></i>`).join('');
    }

    drawBlobs();
    drawPlot();
    drawAxes();
    drawTabs();
  </script>
</body>
</html>
